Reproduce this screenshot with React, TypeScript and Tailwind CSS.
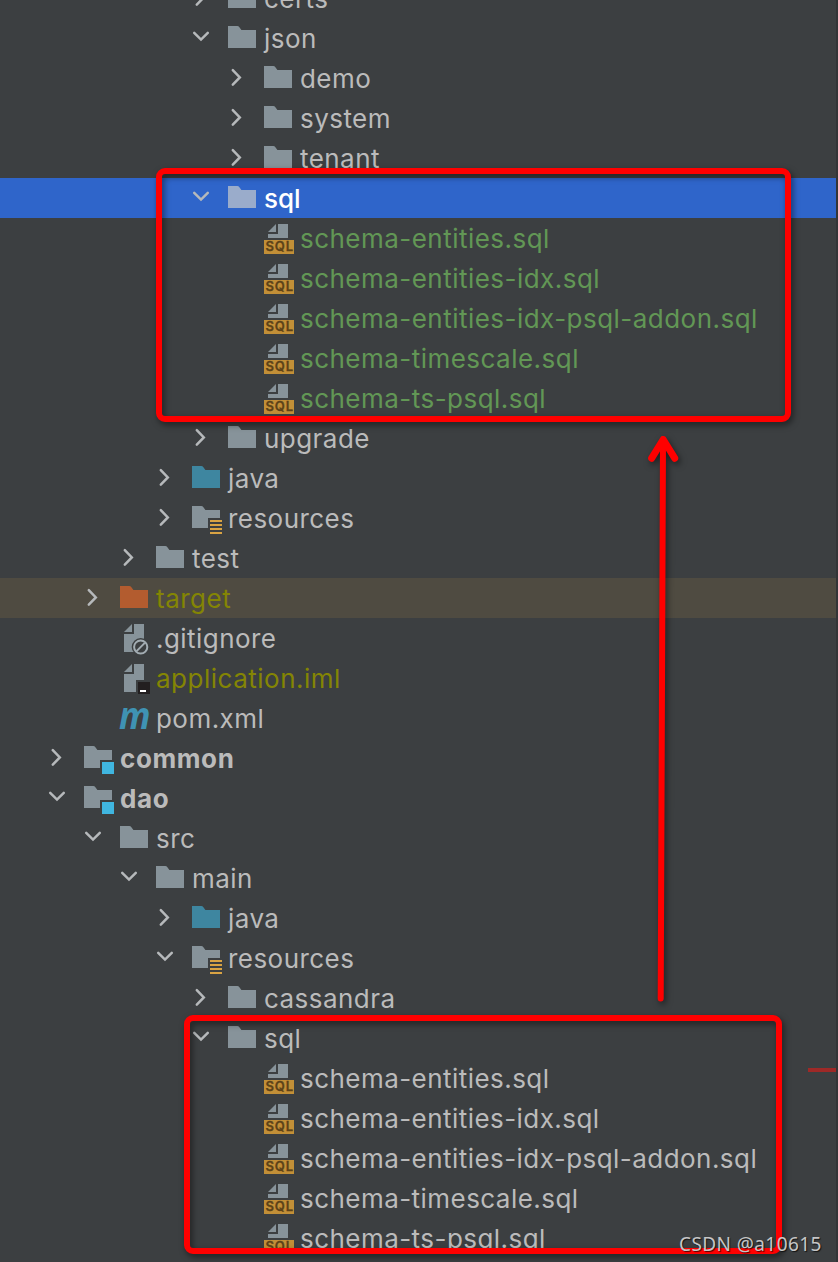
import type { ReactNode } from "react";

type IconKind = "folder" | "source" | "resources" | "excluded" | "module" | "sql" | "ignored" | "iml" | "maven";

interface TreeNode {
  name: string;
  level: number;
  icon: IconKind;
  open?: boolean;
  tone?: string;
  row?: string;
  selected?: boolean;
}

const GREEN = "text-[#629755] tracking-[0.47px]";
const OLIVE = "text-[#848504] tracking-[0.5px]";
const BOLD = "text-[#bbbbbb] font-bold tracking-[0.6px]";
const PLAIN = "text-[#bbbbbb] tracking-[0.45px]";

const sqlFiles = [
  "schema-entities.sql",
  "schema-entities-idx.sql",
  "schema-entities-idx-psql-addon.sql",
  "schema-timescale.sql",
  "schema-ts-psql.sql",
];

const nodes: TreeNode[] = [
  { name: "certs", level: 4, icon: "folder", open: false },
  { name: "json", level: 4, icon: "folder", open: true },
  { name: "demo", level: 5, icon: "folder", open: false },
  { name: "system", level: 5, icon: "folder", open: false },
  { name: "tenant", level: 5, icon: "folder", open: false },
  { name: "sql", level: 4, icon: "folder", open: true, selected: true, tone: "text-white font-medium", row: "bg-[#2f65ca]" },
  ...sqlFiles.map((name): TreeNode => ({ name, level: 5, icon: "sql", tone: GREEN })),
  { name: "upgrade", level: 4, icon: "folder", open: false },
  { name: "java", level: 3, icon: "source", open: false },
  { name: "resources", level: 3, icon: "resources", open: false },
  { name: "test", level: 2, icon: "folder", open: false },
  { name: "target", level: 1, icon: "excluded", open: false, tone: OLIVE, row: "bg-[#4f4b41]" },
  { name: ".gitignore", level: 1, icon: "ignored" },
  { name: "application.iml", level: 1, icon: "iml", tone: OLIVE },
  { name: "pom.xml", level: 1, icon: "maven" },
  { name: "common", level: 0, icon: "module", open: false, tone: BOLD },
  { name: "dao", level: 0, icon: "module", open: true, tone: BOLD },
  { name: "src", level: 1, icon: "folder", open: true },
  { name: "main", level: 2, icon: "folder", open: true },
  { name: "java", level: 3, icon: "source", open: false },
  { name: "resources", level: 3, icon: "resources", open: true },
  { name: "cassandra", level: 4, icon: "folder", open: false },
  { name: "sql", level: 4, icon: "folder", open: true },
  ...sqlFiles.map((name): TreeNode => ({ name, level: 5, icon: "sql" })),
];

const indent = ["pl-[42px]", "pl-[78px]", "pl-[114px]", "pl-[150px]", "pl-[186px]", "pl-[222px]"];

const FOLDER = "M2 4H11.2Q12.6 4 13.4 5.2L15.4 8H30V26H2Z";
const FOLDER_CUT_16 = "M2 4H11.2Q12.6 4 13.4 5.2L15.4 8H30V16H18V26H2Z";
const FOLDER_CUT_18 = "M2 4H11.2Q12.6 4 13.4 5.2L15.4 8H30V18H18V26H2Z";

function Svg({ children }: { children?: ReactNode }) {
  return (
    <svg width="32" height="32" viewBox="0 0 32 32" className="shrink-0 overflow-visible">
      {children}
    </svg>
  );
}

function NodeIcon({ kind, selected }: { kind: IconKind; selected?: boolean }) {
  const gray = selected ? "#9aaccb" : "#87939a";
  switch (kind) {
    case "folder":
      return <Svg><path d={FOLDER} fill={gray} /></Svg>;
    case "source":
      return <Svg><path d={FOLDER} fill="#3e86a0" /></Svg>;
    case "excluded":
      return <Svg><path d={FOLDER} fill="#b35c2f" /></Svg>;
    case "resources":
      return (
        <Svg>
          <path d={FOLDER_CUT_16} fill={gray} />
          <path d="M20 18H32V20H20ZM20 22H32V24H20ZM20 26H32V28H20ZM20 30H32V32H20Z" fill="#d9a343" />
        </Svg>
      );
    case "module":
      return (
        <Svg>
          <path d={FOLDER_CUT_18} fill={gray} />
          <path d="M20 20H32V32H20Z" fill="#40b6e0" />
        </Svg>
      );
    case "sql":
      return (
        <Svg>
          <path d="M14 2V10H6ZM16 2H26V16H6V12H16Z" fill={gray} />
          <path d="M2 18H32V32H2Z" fill="#c28f37" />
          <text x="3.4" y="29" textLength="27.6" fontSize="13" fontWeight="600" fill="#5c4218" stroke="#5c4218" strokeWidth="0.3" fontFamily="Inter, sans-serif">
            SQL
          </text>
        </Svg>
      );
    case "ignored":
      return (
        <Svg>
          <path d="M14 2V10H6ZM16 2H26V30H6V12H16Z" fill={gray} />
          <circle cx="22.7" cy="25" r="9" fill="#3c3f41" />
          <circle cx="22.7" cy="25" r="6.6" fill="none" stroke="#a3adb3" strokeWidth="2" />
          <path d="M18.6 29.1L26.8 20.9" stroke="#a3adb3" strokeWidth="2" />
        </Svg>
      );
    case "iml":
      return (
        <Svg>
          <path d="M14 2V10H6ZM16 2H26V18H18V30H6V12H16Z" fill={gray} />
          <path d="M20 20H32V32H20Z" fill="#231f20" />
          <path d="M22 28H28V30H22Z" fill="#ffffff" />
        </Svg>
      );
    case "maven":
      return (
        <Svg>
          <text x="1" y="26.5" fontSize="37" textLength="31.5" lengthAdjust="spacingAndGlyphs" fontWeight="700" fontStyle="italic" fill="#3f93b3" fontFamily="Open Sans, sans-serif">
            m
          </text>
        </Svg>
      );
  }
}

function Chevron({ open }: { open?: boolean }) {
  if (open === undefined) return <Svg />;
  return (
    <Svg>
      <path
        d={open ? "M8.2 10.8L15 17.6L21.8 10.8" : "M10.8 8.2L17.8 15.4L10.8 22.6"}
        fill="none"
        stroke="#b6b9bb"
        strokeWidth="2.5"
        strokeLinecap="round"
      />
    </Svg>
  );
}

function TreeRow({ node }: { node: TreeNode }) {
  return (
    <div className={`flex h-10 items-center ${indent[node.level]} ${node.row ?? ""}`}>
      <Chevron open={node.open} />
      <div className="ml-2 mr-1.5 flex">
        <NodeIcon kind={node.icon} selected={node.selected} />
      </div>
      <span className={`whitespace-nowrap pt-0.5 text-[26px] leading-[38px] ${node.tone ?? PLAIN}`}>
        {node.name}
      </span>
    </div>
  );
}

export default function App() {
  return (
    <div className="relative h-[1262px] w-[838px] overflow-hidden bg-[#3c3f41] font-['Inter',sans-serif]">
      <div className="flex">
        <div className="h-[1248px] w-[836px] overflow-hidden">
          <div className="-mt-[22px]">
            {nodes.map((node, i) => (
              <TreeRow key={i} node={node} />
            ))}
          </div>
        </div>
        <div className="h-[1262px] w-0.5 bg-[#333537]" />
      </div>

      {/* error stripe mark */}
      <div className="absolute left-[808px] top-[1068px] h-1 w-7 bg-[#9e2927]" />

      {/* annotations */}
      <div className="absolute left-[156px] top-[168px] h-[254px] w-[635px] rounded-[9px] border-[6px] border-[#ff0000] drop-shadow-[2px_3px_3px_rgba(0,0,0,0.5)]" />
      <div className="absolute left-[184px] top-[1015px] h-[239px] w-[598px] rounded-[9px] border-[6px] border-[#ff0000] drop-shadow-[2px_3px_3px_rgba(0,0,0,0.5)]" />
      <svg
        width="60"
        height="590"
        viewBox="0 0 60 590"
        className="absolute left-[635px] top-[425px] drop-shadow-[2px_3px_3px_rgba(0,0,0,0.5)]"
      >
        <g fill="none" stroke="#ff0000" strokeLinecap="round" strokeLinejoin="round">
          <path d="M28 16L25.7 573.6" strokeWidth="6" />
          <path d="M16.7 33.2L28.2 14.5L39.7 33.2" strokeWidth="7" />
        </g>
      </svg>

      <div className="absolute left-[679px] top-[1232px] whitespace-nowrap font-['Noto_Sans',sans-serif] text-[19px] leading-6 tracking-[0.42px] text-[#c6c6c6] [text-shadow:1px_1px_1px_rgba(0,0,0,0.7)]">
        CSDN @a10615
      </div>
    </div>
  );
}
